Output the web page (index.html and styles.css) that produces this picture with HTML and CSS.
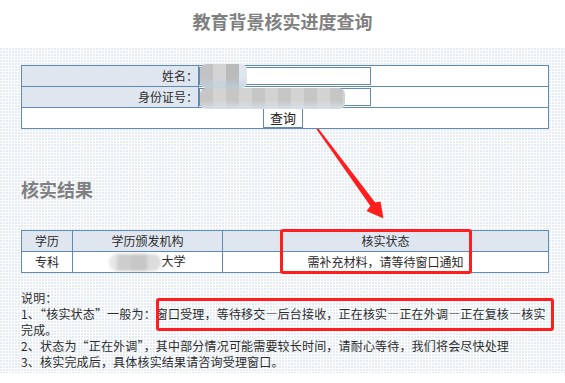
FILE: index.html
```html
<!DOCTYPE html>
<html lang="zh-CN">
<head>
<meta charset="utf-8">
<title>教育背景核实进度查询</title>
<link rel="stylesheet" href="styles.css">
</head>
<body>
<h1 class="title">教育背景核实进度查询</h1>
<div class="main">
  <table class="query">
    <colgroup><col class="q1"><col class="q2"></colgroup>
    <tr>
      <td class="label">姓名：</td>
      <td class="field"><span class="input-wrap"><input class="input" type="text"><span class="mosaic mosaic-name"></span></span></td>
    </tr>
    <tr>
      <td class="label">身份证号：</td>
      <td class="field"><span class="input-wrap"><input class="input" type="text"><span class="mosaic mosaic-id"></span></span></td>
    </tr>
    <tr>
      <td colspan="2" class="action"><button class="btn" type="button">查询</button></td>
    </tr>
  </table>

  <h2 class="section">核实结果</h2>

  <table class="result">
    <colgroup><col class="r1"><col class="r2"><col class="r3"></colgroup>
    <tr class="head"><th>学历</th><th>学历颁发机构</th><th>核实状态</th></tr>
    <tr><td>专科</td><td><span class="blur-name"></span>大学</td><td>需补充材料，请等待窗口通知</td></tr>
  </table>

  <div class="notes">
    <p>说明：</p>
    <p>1、“核实状态”一般为：窗口受理，等待移交—后台接收，正在核实—正在外调—正在复核—核实完成。</p>
    <p>2、状态为“正在外调”，其中部分情况可能需要较长时间，请耐心等待，我们将会尽快处理</p>
    <p>3、核实完成后，具体核实结果请咨询受理窗口。</p>
  </div>

  <svg class="arrow" viewBox="0 48 565 325" width="565" height="325" aria-hidden="true">
    <polygon points="316.3,129 318.8,129 375.2,202.5 380.5,201.5 383.5,218.5 366.5,211 370.4,206.1" fill="#ff1e1e"/>
  </svg>
  <div class="mark mark-status"></div>
  <div class="mark mark-flow"></div>
</div>
</body>
</html>
```

FILE: styles.css
```css
* { box-sizing: border-box; }
html, body { margin: 0; padding: 0; background: #fff; }
body {
  font-family: "Noto Sans CJK SC", "Noto Sans", sans-serif;
  font-size: 12px;
  color: #333;
}
.title {
  margin: 9px 0 0;
  height: 24px;
  line-height: 24px;
  font-size: 18px;
  font-weight: bold;
  color: #808080;
  text-align: center;
}
.main {
  position: relative;
  margin-top: 15px;
  padding: 17px 17px 3px 21px;
  background-color: #fff;
  background-image: radial-gradient(circle at 1px 1px, #e3ebf4 0.7px, transparent 1px);
  background-size: 3px 3px;
}
table {
  border-collapse: collapse;
  table-layout: fixed;
  width: 527px;
}
td, th {
  border: 1px solid #5e8ab4;
  padding: 0;
  height: 21px;
  font-size: 12px;
  font-weight: normal;
  line-height: 16px;
  background: #fff;
  color: #2b2b2b;
}
.q1 { width: 177px; }
.q2 { width: 350px; }
.label {
  background: #dfe6f0;
  text-align: right;
  padding-right: 0;
}
.input-wrap {
  position: relative;
  display: block;
  width: 172px;
  height: 18px;
}
.input {
  display: block;
  width: 172px;
  height: 18px;
  margin: 0;
  padding: 0;
  border: 1px solid #5e8ab4;
  background: #fff;
}
.mosaic {
  position: absolute;
  left: 1px;
  border-radius: 6px;
  filter: blur(0.7px);
}
.mosaic-name {
  top: -3px;
  width: 47px;
  height: 24px;
  background:
    linear-gradient(to bottom, rgba(255,255,255,0) 55%, rgba(190,208,224,0.75) 100%),
    linear-gradient(to right, #c3c3c3 0 13px, #d4d4d4 13px 26px, #bababa 26px 39px, #dfe6ee 39px);
}
.mosaic-id {
  top: 0;
  width: 145px;
  height: 21px;
  background:
    linear-gradient(to bottom, rgba(255,255,255,0) 60%, rgba(215,226,236,0.9) 100%),
    repeating-linear-gradient(to right, #c6c6c6 0 13px, #d3d3d3 13px 26px);
}
.action { text-align: center; }
.btn {
  display: inline-block;
  vertical-align: top;
  width: 40px;
  height: 20px;
  margin: 0 0 0 -4px;
  padding: 0;
  border: 1px solid #5e8ab4;
  border-top: 0;
  background: #fff;
  font-family: "Noto Sans CJK SC", "Noto Sans", sans-serif;
  font-size: 13px;
  line-height: 18px;
  color: #222;
}
.section {
  margin: 48px 0 29px;
  height: 24px;
  line-height: 24px;
  font-size: 18px;
  font-weight: bold;
  color: #808080;
}
.r1 { width: 51px; }
.r2 { width: 150px; }
.r3 { width: 326px; }
.result td, .result th { text-align: center; }
.result .head th { background: #dfe6f0; }
.blur-name {
  display: inline-block;
  vertical-align: middle;
  width: 52px;
  height: 17px;
  margin-top: -2px;
  border-radius: 8px;
  background: linear-gradient(to right, #e6e6e6 0 8px, #cdcdcd 8px 22px, #c6c6c6 22px 38px, #dcdcdc 38px);
  filter: blur(1.5px);
}
.notes { margin-top: 17px; }
.notes p {
  margin: 0;
  line-height: 16px;
  font-size: 12px;
  letter-spacing: 0.18px;
  color: #2b2b2b;
}
.arrow {
  position: absolute;
  left: 0;
  top: 0;
  pointer-events: none;
}
.mark {
  position: absolute;
  border: 3px solid #ff1e1e;
  border-radius: 3px;
}
.mark-status { left: 280px; top: 181px; width: 192px; height: 45px; }
.mark-flow { left: 156px; top: 250px; width: 398px; height: 33px; }
```
